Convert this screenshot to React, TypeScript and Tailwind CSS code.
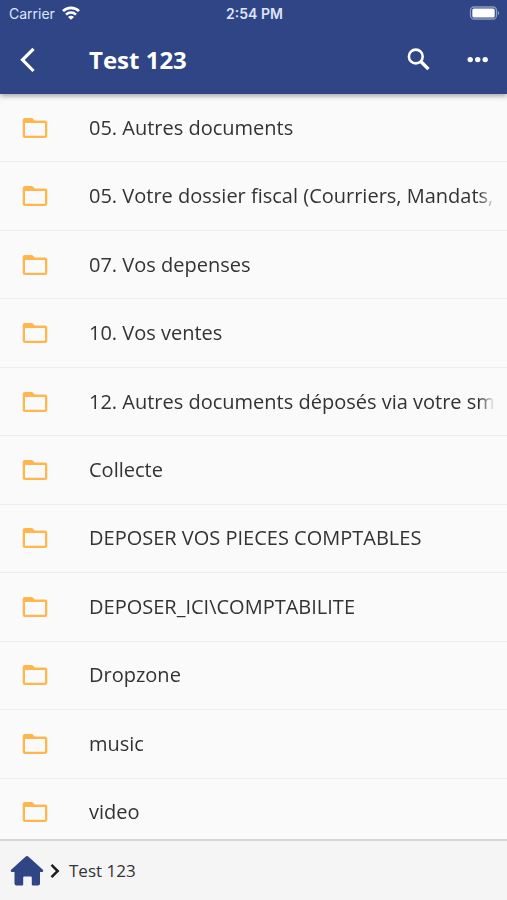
import type { ReactNode } from 'react'

const folders = [
    '05. Autres documents',
    '05. Votre dossier fiscal (Courriers, Mandats,',
    '07. Vos depenses',
    '10. Vos ventes',
    '12. Autres documents déposés via votre sm',
    'Collecte',
    'DEPOSER VOS PIECES COMPTABLES',
    'DEPOSER_ICI\\COMPTABILITE',
    'Dropzone',
    'music',
    'video',
]

function WifiIcon() {
    return (
        <svg viewBox="0 0 18 14" className="h-[14px] w-[18px]" fill="none" stroke="currentColor" strokeWidth="2.6">
            <path d="M1 5.2C5.4.8 12.6.8 17 5.2" />
            <path d="M4 8.6c2.8-2.8 7.2-2.8 10 0" />
            <path d="M9 13.8 6 10.9c1.600-1.500 4.400-1.500 6 0z" fill="currentColor" stroke="none" />
        </svg>
    )
}

function BatteryIcon() {
    return (
        <svg viewBox="0 0 31 14" className="h-[14px] w-[31px]" fill="none">
            <rect x="1.500" y="1" width="26" height="12" rx="3.500" stroke="#8d9ac6" strokeWidth="1.300" />
            <rect x="3.300" y="2.500" width="22.400" height="9" rx="1.600" fill="#fff" />
            <path d="M28.800 5c1.800.7 1.800 3.300 0 4z" fill="#8d9ac6" />
        </svg>
    )
}

function StatusBar() {
    return (
        <div className="grid h-7 grid-cols-3 items-center pr-[7px] pb-0.5 pl-[9px] font-['Inter',sans-serif] text-[14px] text-[#dfe6fb]">
            <div className="flex items-center gap-[7px]">
                <span>Carrier</span>
                <span className="text-white">
                    <WifiIcon />
                </span>
            </div>
            <span className="text-center font-semibold">2:54 PM</span>
            <div className="flex justify-end">
                <BatteryIcon />
            </div>
        </div>
    )
}

function IconButton({ label, children }: { label: string; children: ReactNode }) {
    return (
        <button type="button" aria-label={label} className="flex size-9 items-center justify-center">
            {children}
        </button>
    )
}

function AppBar() {
    return (
        <div className="flex h-16 items-center pr-[11px] pl-[9px]">
            <IconButton label="Back">
                <svg viewBox="0 0 36 36" className="size-9" fill="none" stroke="currentColor" strokeWidth="3.200">
                    <path d="M24.500 6.800 13.500 17.800l11 11.200" />
                </svg>
            </IconButton>
            <h1 className="ml-11 flex-1 text-[24px] font-bold">Test 123</h1>
            <div className="flex gap-6">
                <IconButton label="Search">
                    <svg viewBox="0 0 36 36" className="size-9" fill="none" stroke="currentColor">
                        <circle cx="15.800" cy="14.500" r="6.900" strokeWidth="2.600" />
                        <path d="m20.600 19.300 7.800 7.800" strokeWidth="3.400" />
                    </svg>
                </IconButton>
                <IconButton label="More">
                    <svg viewBox="0 0 36 36" className="size-9" fill="currentColor">
                        <circle cx="10.200" cy="17.600" r="2.700" />
                        <circle cx="17.700" cy="17.600" r="2.700" />
                        <circle cx="25.200" cy="17.600" r="2.700" />
                    </svg>
                </IconButton>
            </div>
        </div>
    )
}

function FolderIcon() {
    return (
        <svg viewBox="0 0 26 22" className="h-[22px] w-[26px] shrink-0">
            <path
                fill="#ffb74d"
                fillRule="evenodd"
                d="M3 1h7.200l2.600 2.400H23A2.300 2.300 0 0 1 25.300 5.700v13A2.300 2.300 0 0 1 23 21H3A2.300 2.300 0 0 1 .7 18.700V3.300A2.300 2.300 0 0 1 3 1ZM3 6v12.800h20V6Z"
            />
        </svg>
    )
}

function FolderRow({ name }: { name: string }) {
    return (
        <li className="flex flex-1 border-b border-[#eeeeee]">
            <button type="button" className="flex min-w-0 flex-1 items-center gap-[41px] pr-3 pl-[22px] text-left">
                <FolderIcon />
                <span className="min-w-0 flex-1 overflow-hidden mask-r-from-[calc(100%-16px)] text-[20px] leading-7 whitespace-nowrap">
                    {name}
                </span>
            </button>
        </li>
    )
}

function Breadcrumbs() {
    return (
        <nav aria-label="Breadcrumb" className="relative flex h-[61px] items-center border-t-2 border-[#d6d6d6] bg-[#f5f5f5] pl-[10px]">
            <a href="#home" aria-label="Home" className="text-[#2f4585]">
                <svg viewBox="0 0 34 32" className="h-8 w-[34px]" fill="currentColor">
                    <path d="M15.500 1.700a2.200 2.200 0 0 1 3 0L32.600 14.600c1.300 1.200.8 2.400-.8 2.400H30v11.500a2 2 0 0 1-2 2h-5.200a1 1 0 0 1-1-1V22.500a1 1 0 0 0-1-1h-6.600a1 1 0 0 0-1 1v7a1 1 0 0 1-1 1H6.500a2 2 0 0 1-2-2V17H2.200C.6 17 .1 15.800 1.400 14.600Z" />
                </svg>
            </a>
            <svg viewBox="0 0 12 16" className="ml-[5px] h-4 w-3" fill="none" stroke="#1c1c1c" strokeWidth="2.500">
                <path d="m2.500 1.800 6.200 6.200-6.200 6.200" />
            </svg>
            <a href="#test-123" className="ml-2 text-[17px]">
                Test 123
            </a>
        </nav>
    )
}

export default function App() {
    return (
        <div className="flex min-h-screen flex-col bg-[#fafafa] font-['Open_Sans',sans-serif] text-[#333333]">
            <header className="relative bg-[#2f4585] pb-0.5 text-white shadow-[0_2px_5px_rgba(0,0,0,0.35)]">
                <StatusBar />
                <AppBar />
            </header>
            <main className="flex flex-1 flex-col overflow-hidden">
                <ul className="-mb-2 flex flex-1 flex-col">
                    {folders.map((name) => (
                        <FolderRow key={name} name={name} />
                    ))}
                </ul>
            </main>
            <Breadcrumbs />
        </div>
    )
}
